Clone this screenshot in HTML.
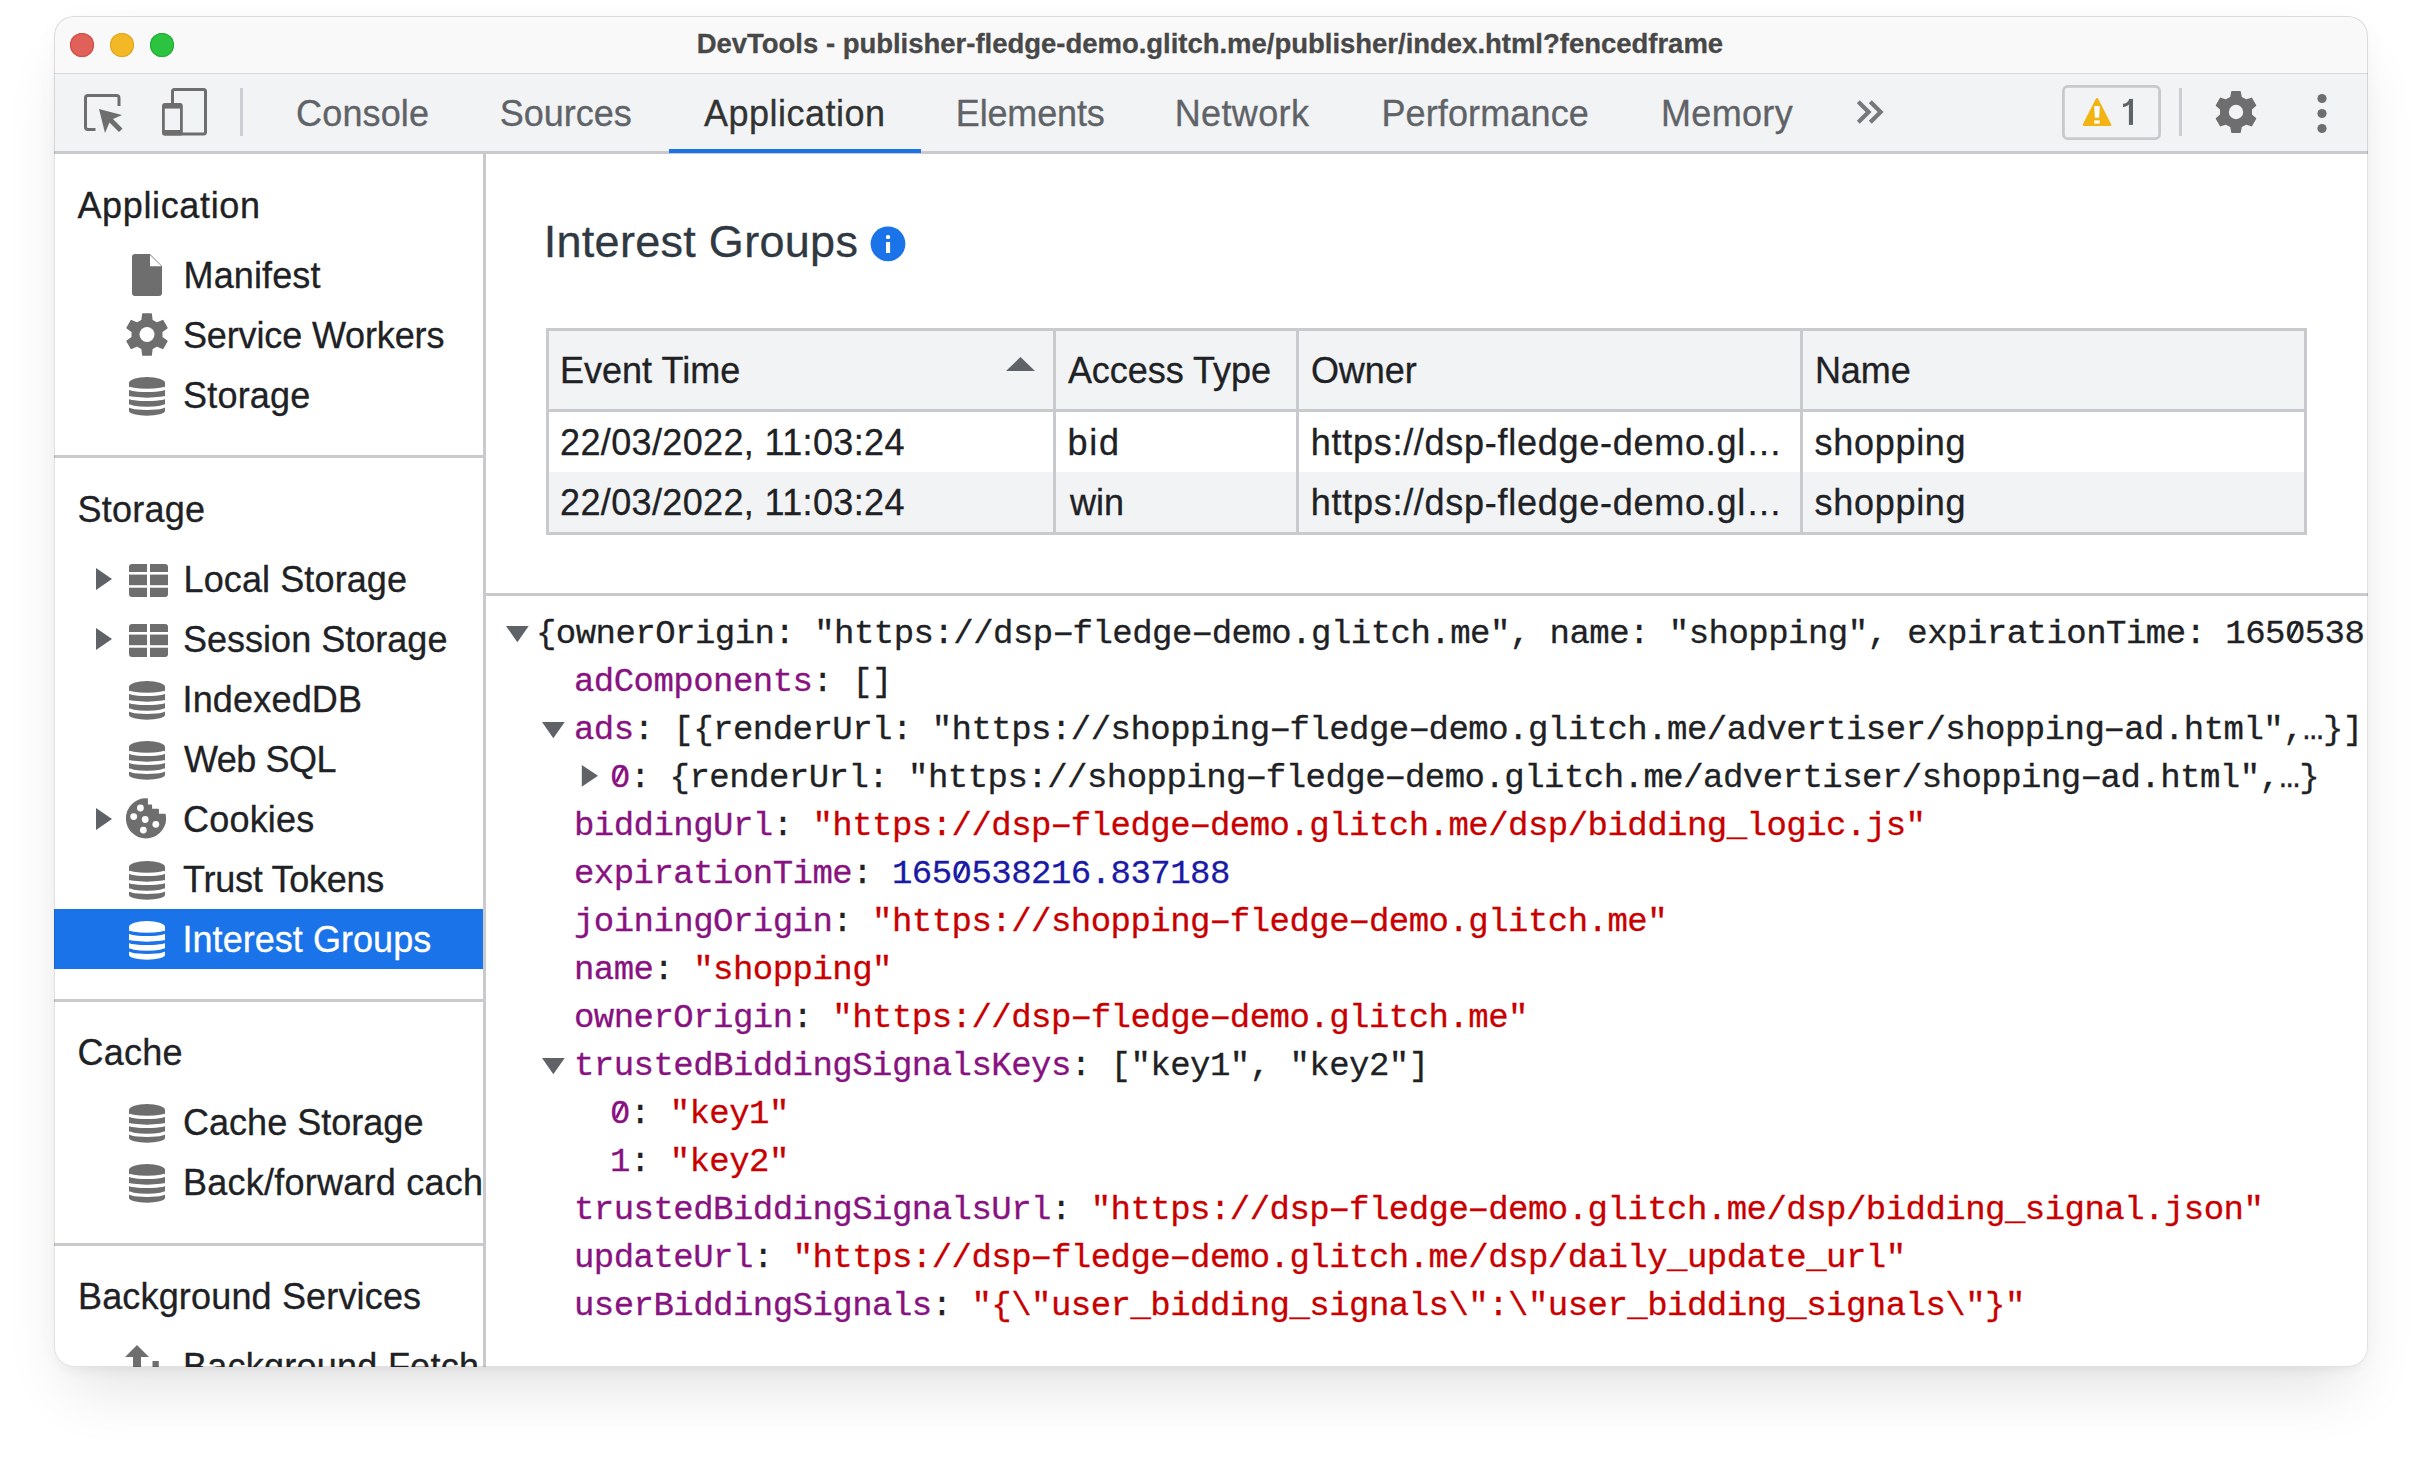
<!DOCTYPE html>
<html><head><meta charset="utf-8">
<style>
html,body{margin:0;padding:0;width:2422px;height:1458px;overflow:hidden;background:#fff;}
body{position:relative;font-family:"Liberation Sans",sans-serif;}
.t{position:absolute;white-space:pre;-webkit-text-stroke:0.3px currentColor;}
.r{position:absolute;}
.hy{display:inline-block;transform:scaleX(1.72);}
#win{position:absolute;left:54px;top:16px;width:2314px;height:1351px;border-radius:20px;overflow:hidden;background:#fff;}
#shadow{position:absolute;left:54px;top:16px;width:2314px;height:1351px;border-radius:20px;}
#pg{position:absolute;left:-54px;top:-16px;width:2422px;height:1458px;}
.clip{position:absolute;overflow:hidden;}
svg{position:absolute;overflow:visible;}
</style></head><body>
<div id="shadow" style="box-shadow:0 34px 64px -16px rgba(0,0,0,0.12),0 6px 12px -5px rgba(0,0,0,0.06),0 0 30px rgba(0,0,0,0.02);"></div>
<div id="win"><div id="pg">
<div class="r" style="left:54px;top:16px;width:2314px;height:57px;background:#f9f9f9;"></div>
<div class="r" style="left:54px;top:73px;width:2314px;height:1px;background:#d9d9db;"></div>
<div class="r" style="left:70px;top:33px;width:24px;height:24px;border-radius:50%;background:#e0605a;box-shadow:inset 0 0 0 1px #d24a43"></div>
<div class="r" style="left:110px;top:33px;width:24px;height:24px;border-radius:50%;background:#f3b826;box-shadow:inset 0 0 0 1px #e0a31c"></div>
<div class="r" style="left:150px;top:33px;width:24px;height:24px;border-radius:50%;background:#2bc33f;box-shadow:inset 0 0 0 1px #22ab32"></div>
<div class="t" style="left:696.70px;top:30.22px;font-size:27.5px;line-height:27.5px;color:#484848;font-weight:700;font-family:'Liberation Sans',sans-serif;letter-spacing:-0.019px;">DevTools - publisher-fledge-demo.glitch.me/publisher/index.html?fencedframe</div>
<div class="r" style="left:54px;top:74px;width:2314px;height:77px;background:#f1f3f4;"></div>
<div class="r" style="left:54px;top:151px;width:2314px;height:3px;background:#c9cacd;"></div>
<svg style="left:0;top:0" width="2422" height="200" viewBox="0 0 2422 200">
<g fill="none" stroke="#6e6e6e" stroke-width="3">
 <path d="M95.5 129.5 H88 Q85.5 129.5 85.5 127 V98 Q85.5 95.5 88 95.5 H116.5 Q119 95.5 119 98 V106"/>
</g>
<path fill="#6e6e6e" d="M99 109 L122 115 L113 119 L122.5 128.5 L119 132 L109.5 122.5 L105 133 Z"/>
<g fill="none" stroke="#6e6e6e" stroke-width="3">
 <path d="M172.5 103 V91.5 Q172.5 89.5 174.5 89.5 H203.5 Q205.5 89.5 205.5 91.5 V132 Q205.5 134 203.5 134 H180"/>
</g>
<rect x="162" y="103" width="20.8" height="32.8" rx="3" fill="#6e6e6e"/>
<rect x="164.8" y="108.6" width="15.2" height="21.4" fill="#f1f3f4"/>
<rect x="240" y="88" width="3" height="48" fill="#cacdd1"/>
<g fill="none" stroke="#76787b" stroke-width="4.2" stroke-linecap="butt" stroke-linejoin="miter">
 <path d="M1858.3 101.8 L1868.6 112 L1858.3 122.2"/>
 <path d="M1870.3 101.8 L1880.6 112 L1870.3 122.2"/>
</g>
<rect x="2063.4" y="86.4" width="96.2" height="52.3" rx="4.5" fill="none" stroke="#c8c9cd" stroke-width="2.8"/>
<path d="M2097 99.3 L2110 124.8 L2084 124.8 Z" fill="#f2b413" stroke="#f2b413" stroke-width="2.6" stroke-linejoin="round"/>
<path d="M2094.2 106 L2099.8 106 L2099.1 117.8 L2094.9 117.8 Z" fill="#fff"/>
<rect x="2094.3" y="120.4" width="5.4" height="3.2" fill="#fff"/>
<rect x="2128.9" y="98.9" width="4.1" height="26" fill="#5f6368"/>
<path d="M2123 103.8 Q2127.5 103.4 2129.6 98.9 L2131.5 100.5 Q2129 106.6 2123 107.1 Z" fill="#5f6368"/>
<rect x="2179" y="88" width="3" height="48" fill="#cacdd1"/>
<circle cx="2322" cy="98.5" r="4.6" fill="#6e6e6e"/>
<circle cx="2322" cy="113.5" r="4.6" fill="#6e6e6e"/>
<circle cx="2322" cy="128.5" r="4.6" fill="#6e6e6e"/>
</svg>
<svg style="left:0;top:0" width="2422" height="200"><path d="M2231.93 91.81 L2240.07 91.81 L2241.10 97.36 L2246.13 100.27 L2251.45 98.38 L2255.52 105.43 L2251.23 109.10 L2251.23 114.90 L2255.52 118.57 L2251.45 125.62 L2246.13 123.73 L2241.10 126.64 L2240.07 132.19 L2231.93 132.19 L2230.90 126.64 L2225.87 123.73 L2220.55 125.62 L2216.48 118.57 L2220.77 114.90 L2220.77 109.10 L2216.48 105.43 L2220.55 98.38 L2225.87 100.27 L2230.90 97.36Z" fill="#6e6e6e" stroke="#6e6e6e" stroke-width="1.5" stroke-linejoin="round"/><circle cx="2236" cy="112" r="7.2" fill="#f1f3f4"/></svg>
<div class="t" style="left:296.10px;top:95.52px;font-size:36px;line-height:36px;color:#5f6368;font-weight:400;font-family:'Liberation Sans',sans-serif;letter-spacing:0.140px;">Console</div>
<div class="t" style="left:499.80px;top:95.52px;font-size:36px;line-height:36px;color:#5f6368;font-weight:400;font-family:'Liberation Sans',sans-serif;letter-spacing:-0.011px;">Sources</div>
<div class="t" style="left:703.90px;top:95.52px;font-size:36px;line-height:36px;color:#333333;font-weight:400;font-family:'Liberation Sans',sans-serif;letter-spacing:0.501px;">Application</div>
<div class="t" style="left:955.80px;top:95.52px;font-size:36px;line-height:36px;color:#5f6368;font-weight:400;font-family:'Liberation Sans',sans-serif;letter-spacing:-0.152px;">Elements</div>
<div class="t" style="left:1174.70px;top:95.52px;font-size:36px;line-height:36px;color:#5f6368;font-weight:400;font-family:'Liberation Sans',sans-serif;letter-spacing:0.362px;">Network</div>
<div class="t" style="left:1381.40px;top:95.52px;font-size:36px;line-height:36px;color:#5f6368;font-weight:400;font-family:'Liberation Sans',sans-serif;letter-spacing:0.134px;">Performance</div>
<div class="t" style="left:1661.00px;top:95.52px;font-size:36px;line-height:36px;color:#5f6368;font-weight:400;font-family:'Liberation Sans',sans-serif;letter-spacing:0.338px;">Memory</div>
<div class="r" style="left:669px;top:149px;width:252px;height:4px;background:#1a73e8;"></div>
<div class="r" style="left:483px;top:151px;width:3px;height:1216px;background:#c9cacd;"></div>
<div class="clip" style="left:54px;top:153px;width:429px;height:1214px;"><div style="position:absolute;left:-54px;top:-153px;width:2422px;height:1458px;">
<div class="r" style="left:54px;top:455px;width:429px;height:3px;background:#c9cacd;"></div>
<div class="r" style="left:54px;top:999px;width:429px;height:3px;background:#c9cacd;"></div>
<div class="r" style="left:54px;top:1243px;width:429px;height:3px;background:#c9cacd;"></div>
<div class="r" style="left:54px;top:909px;width:429px;height:60px;background:#1a73e8;"></div>
<div class="t" style="left:77.40px;top:187.52px;font-size:36px;line-height:36px;color:#202124;font-weight:400;font-family:'Liberation Sans',sans-serif;letter-spacing:0.651px;">Application</div>
<div class="t" style="left:183.60px;top:257.52px;font-size:36px;line-height:36px;color:#202124;font-weight:400;font-family:'Liberation Sans',sans-serif;letter-spacing:0.107px;">Manifest</div>
<div class="t" style="left:183.00px;top:317.52px;font-size:36px;line-height:36px;color:#202124;font-weight:400;font-family:'Liberation Sans',sans-serif;letter-spacing:-0.142px;">Service Workers</div>
<div class="t" style="left:183.00px;top:377.52px;font-size:36px;line-height:36px;color:#202124;font-weight:400;font-family:'Liberation Sans',sans-serif;letter-spacing:0.206px;">Storage</div>
<div class="t" style="left:77.50px;top:491.52px;font-size:36px;line-height:36px;color:#202124;font-weight:400;font-family:'Liberation Sans',sans-serif;letter-spacing:0.239px;">Storage</div>
<div class="t" style="left:183.50px;top:561.52px;font-size:36px;line-height:36px;color:#202124;font-weight:400;font-family:'Liberation Sans',sans-serif;letter-spacing:0.114px;">Local Storage</div>
<div class="t" style="left:183.00px;top:621.52px;font-size:36px;line-height:36px;color:#202124;font-weight:400;font-family:'Liberation Sans',sans-serif;letter-spacing:0.018px;">Session Storage</div>
<div class="t" style="left:182.50px;top:681.52px;font-size:36px;line-height:36px;color:#202124;font-weight:400;font-family:'Liberation Sans',sans-serif;letter-spacing:0.174px;">IndexedDB</div>
<div class="t" style="left:184.00px;top:741.52px;font-size:36px;line-height:36px;color:#202124;font-weight:400;font-family:'Liberation Sans',sans-serif;letter-spacing:-0.498px;">Web SQL</div>
<div class="t" style="left:183.00px;top:801.52px;font-size:36px;line-height:36px;color:#202124;font-weight:400;font-family:'Liberation Sans',sans-serif;letter-spacing:0.207px;">Cookies</div>
<div class="t" style="left:183.00px;top:861.52px;font-size:36px;line-height:36px;color:#202124;font-weight:400;font-family:'Liberation Sans',sans-serif;letter-spacing:-0.257px;">Trust Tokens</div>
<div class="t" style="left:182.50px;top:921.52px;font-size:36px;line-height:36px;color:#ffffff;font-weight:400;font-family:'Liberation Sans',sans-serif;letter-spacing:0.042px;">Interest Groups</div>
<div class="t" style="left:77.50px;top:1034.52px;font-size:36px;line-height:36px;color:#202124;font-weight:400;font-family:'Liberation Sans',sans-serif;letter-spacing:0.215px;">Cache</div>
<div class="t" style="left:183.00px;top:1104.52px;font-size:36px;line-height:36px;color:#202124;font-weight:400;font-family:'Liberation Sans',sans-serif;letter-spacing:0.022px;">Cache Storage</div>
<div class="t" style="left:183.00px;top:1164.52px;font-size:36px;line-height:36px;color:#202124;font-weight:400;font-family:'Liberation Sans',sans-serif;letter-spacing:0.250px;">Back/forward cache</div>
<div class="t" style="left:78.00px;top:1278.52px;font-size:36px;line-height:36px;color:#202124;font-weight:400;font-family:'Liberation Sans',sans-serif;letter-spacing:0.163px;">Background Services</div>
<div class="t" style="left:183.00px;top:1348.52px;font-size:36px;line-height:36px;color:#202124;font-weight:400;font-family:'Liberation Sans',sans-serif;letter-spacing:0.250px;">Background Fetch</div>
<svg style="left:0;top:0" width="2422" height="1458"><path d="M135 254 H150 L162 266 V293 Q162 296 159 296 H135 Q132 296 132 293 V257 Q132 254 135 254 Z" fill="#6e6e6e"/><path d="M150 255 L161.5 266.3 H150 Z" fill="#fff"/><path d="M142.85 313.91 L151.15 313.91 L151.93 320.33 L156.80 323.15 L162.75 320.61 L166.90 327.80 L161.73 331.69 L161.73 337.31 L166.90 341.20 L162.75 348.39 L156.80 345.85 L151.93 348.67 L151.15 355.09 L142.85 355.09 L142.07 348.67 L137.20 345.85 L131.25 348.39 L127.10 341.20 L132.27 337.31 L132.27 331.69 L127.10 327.80 L131.25 320.61 L137.20 323.15 L142.07 320.33Z" fill="#6e6e6e" stroke="#6e6e6e" stroke-width="1.5" stroke-linejoin="round"/><circle cx="147" cy="334.5" r="7.5" fill="#fff"/><path d="M129 382.8 A18 5.8 0 0 1 165 382.8 V410.8 A18 5 0 0 1 129 410.8 Z" fill="#6e6e6e"/><path d="M128 387.2 A19 3.10 0 0 0 166 387.2" fill="none" stroke="#fff" stroke-width="3.2"/><path d="M128 396.4 A19 2.90 0 0 0 166 396.4" fill="none" stroke="#fff" stroke-width="3.2"/><path d="M128 404.6 A19 3.80 0 0 0 166 404.6" fill="none" stroke="#fff" stroke-width="3.2"/><path d="M96 568 L112 579.0 L96 590 Z" fill="#5f6368"/><rect x="129" y="564" width="39" height="33" rx="3" fill="#6e6e6e"/><rect x="147" y="563" width="3" height="35" fill="#fff"/><rect x="128" y="572" width="41" height="2.6" fill="#fff"/><rect x="128" y="585.2" width="41" height="2.5" fill="#fff"/><path d="M96 628 L112 639.0 L96 650 Z" fill="#5f6368"/><rect x="129" y="624" width="39" height="33" rx="3" fill="#6e6e6e"/><rect x="147" y="623" width="3" height="35" fill="#fff"/><rect x="128" y="632" width="41" height="2.6" fill="#fff"/><rect x="128" y="645.2" width="41" height="2.5" fill="#fff"/><path d="M129 686.8 A18 5.8 0 0 1 165 686.8 V714.8 A18 5 0 0 1 129 714.8 Z" fill="#6e6e6e"/><path d="M128 691.2 A19 3.10 0 0 0 166 691.2" fill="none" stroke="#fff" stroke-width="3.2"/><path d="M128 700.4 A19 2.90 0 0 0 166 700.4" fill="none" stroke="#fff" stroke-width="3.2"/><path d="M128 708.6 A19 3.80 0 0 0 166 708.6" fill="none" stroke="#fff" stroke-width="3.2"/><path d="M129 746.8 A18 5.8 0 0 1 165 746.8 V774.8 A18 5 0 0 1 129 774.8 Z" fill="#6e6e6e"/><path d="M128 751.2 A19 3.10 0 0 0 166 751.2" fill="none" stroke="#fff" stroke-width="3.2"/><path d="M128 760.4 A19 2.90 0 0 0 166 760.4" fill="none" stroke="#fff" stroke-width="3.2"/><path d="M128 768.6 A19 3.80 0 0 0 166 768.6" fill="none" stroke="#fff" stroke-width="3.2"/><path d="M96 808 L112 819.0 L96 830 Z" fill="#5f6368"/><path d="M147.2 799.0 L147.2 805.2 L151.4 805.2 L151.4 809.4000000000001 L158.2 809.4000000000001 L158.2 814.4000000000001 L165 814.4000000000001 A19.4 19.4 0 1 1 147.2 799.0 Z" fill="#6e6e6e" stroke="#6e6e6e" stroke-width="1.4" stroke-linejoin="round"/><circle cx="140.4" cy="808.0" r="3.4" fill="#fff"/><circle cx="133.7" cy="816.6" r="3.4" fill="#fff"/><circle cx="145.2" cy="819.5" r="3.4" fill="#fff"/><circle cx="155.8" cy="824.3000000000001" r="3.4" fill="#fff"/><circle cx="143.3" cy="830.1" r="3.4" fill="#fff"/><path d="M129 866.8 A18 5.8 0 0 1 165 866.8 V894.8 A18 5 0 0 1 129 894.8 Z" fill="#6e6e6e"/><path d="M128 871.2 A19 3.10 0 0 0 166 871.2" fill="none" stroke="#fff" stroke-width="3.2"/><path d="M128 880.4 A19 2.90 0 0 0 166 880.4" fill="none" stroke="#fff" stroke-width="3.2"/><path d="M128 888.6 A19 3.80 0 0 0 166 888.6" fill="none" stroke="#fff" stroke-width="3.2"/><path d="M129 926.8 A18 5.8 0 0 1 165 926.8 V954.8 A18 5 0 0 1 129 954.8 Z" fill="#ffffff"/><path d="M128 931.2 A19 3.10 0 0 0 166 931.2" fill="none" stroke="#1a73e8" stroke-width="3.2"/><path d="M128 940.4 A19 2.90 0 0 0 166 940.4" fill="none" stroke="#1a73e8" stroke-width="3.2"/><path d="M128 948.6 A19 3.80 0 0 0 166 948.6" fill="none" stroke="#1a73e8" stroke-width="3.2"/><path d="M129 1109.8 A18 5.8 0 0 1 165 1109.8 V1137.8 A18 5 0 0 1 129 1137.8 Z" fill="#6e6e6e"/><path d="M128 1114.2 A19 3.10 0 0 0 166 1114.2" fill="none" stroke="#fff" stroke-width="3.2"/><path d="M128 1123.4 A19 2.90 0 0 0 166 1123.4" fill="none" stroke="#fff" stroke-width="3.2"/><path d="M128 1131.6 A19 3.80 0 0 0 166 1131.6" fill="none" stroke="#fff" stroke-width="3.2"/><path d="M129 1169.8 A18 5.8 0 0 1 165 1169.8 V1197.8 A18 5 0 0 1 129 1197.8 Z" fill="#6e6e6e"/><path d="M128 1174.2 A19 3.10 0 0 0 166 1174.2" fill="none" stroke="#fff" stroke-width="3.2"/><path d="M128 1183.4 A19 2.90 0 0 0 166 1183.4" fill="none" stroke="#fff" stroke-width="3.2"/><path d="M128 1191.6 A19 3.80 0 0 0 166 1191.6" fill="none" stroke="#fff" stroke-width="3.2"/><path d="M137 1345 L149 1357 H141 V1380 H133 V1357 H125 Z" fill="#6e6e6e"/><rect x="152.5" y="1361" width="6.3" height="16" fill="#6e6e6e"/></svg>
</div></div>
<div class="t" style="left:543.70px;top:219.40px;font-size:45px;line-height:45px;color:#303942;font-weight:400;font-family:'Liberation Sans',sans-serif;letter-spacing:0.290px;">Interest Groups</div>
<svg style="left:0;top:0" width="2422" height="600"><circle cx="888" cy="243.8" r="17.4" fill="#1a73e8"/><rect x="886" y="242" width="4.1" height="11" fill="#fff"/><rect x="886" y="235" width="4.1" height="4.1" rx="1.6" fill="#fff"/></svg>
<div class="r" style="left:546px;top:328px;width:1761px;height:207px;background:#c9cacd;"></div>
<div class="r" style="left:549px;top:331px;width:1755px;height:78px;background:#f1f3f4;"></div>
<div class="r" style="left:549px;top:412px;width:1755px;height:60px;background:#ffffff;"></div>
<div class="r" style="left:549px;top:472px;width:1755px;height:60px;background:#f1f3f4;"></div>
<div class="r" style="left:1053px;top:331px;width:3px;height:201px;background:#c9cacd;"></div>
<div class="r" style="left:1296px;top:331px;width:3px;height:201px;background:#c9cacd;"></div>
<div class="r" style="left:1800px;top:331px;width:3px;height:201px;background:#c9cacd;"></div>
<svg style="left:0;top:0" width="2422" height="600"><path d="M1020.5 357 L1035 371 L1006 371 Z" fill="#5f6368"/></svg>
<div class="t" style="left:560.00px;top:352.52px;font-size:36px;line-height:36px;color:#202124;font-weight:400;font-family:'Liberation Sans',sans-serif;letter-spacing:0.011px;">Event Time</div>
<div class="t" style="left:1067.90px;top:352.52px;font-size:36px;line-height:36px;color:#202124;font-weight:400;font-family:'Liberation Sans',sans-serif;letter-spacing:-0.036px;">Access Type</div>
<div class="t" style="left:1310.90px;top:352.52px;font-size:36px;line-height:36px;color:#202124;font-weight:400;font-family:'Liberation Sans',sans-serif;letter-spacing:-0.061px;">Owner</div>
<div class="t" style="left:1814.90px;top:352.52px;font-size:36px;line-height:36px;color:#202124;font-weight:400;font-family:'Liberation Sans',sans-serif;letter-spacing:-0.069px;">Name</div>
<div class="t" style="left:560.00px;top:424.52px;font-size:36px;line-height:36px;color:#202124;font-weight:400;font-family:'Liberation Sans',sans-serif;letter-spacing:0.362px;">22/03/2022, 11:03:24</div>
<div class="t" style="left:1067.60px;top:424.52px;font-size:36px;line-height:36px;color:#202124;font-weight:400;font-family:'Liberation Sans',sans-serif;letter-spacing:1.690px;">bid</div>
<div class="t" style="left:1310.70px;top:424.52px;font-size:36px;line-height:36px;color:#202124;font-weight:400;font-family:'Liberation Sans',sans-serif;letter-spacing:0.733px;">https://dsp-fledge-demo.gl…</div>
<div class="t" style="left:1814.60px;top:424.52px;font-size:36px;line-height:36px;color:#202124;font-weight:400;font-family:'Liberation Sans',sans-serif;letter-spacing:0.699px;">shopping</div>
<div class="t" style="left:560.00px;top:484.52px;font-size:36px;line-height:36px;color:#202124;font-weight:400;font-family:'Liberation Sans',sans-serif;letter-spacing:0.362px;">22/03/2022, 11:03:24</div>
<div class="t" style="left:1070.00px;top:484.52px;font-size:36px;line-height:36px;color:#202124;font-weight:400;font-family:'Liberation Sans',sans-serif;letter-spacing:-0.048px;">win</div>
<div class="t" style="left:1310.70px;top:484.52px;font-size:36px;line-height:36px;color:#202124;font-weight:400;font-family:'Liberation Sans',sans-serif;letter-spacing:0.733px;">https://dsp-fledge-demo.gl…</div>
<div class="t" style="left:1814.60px;top:484.52px;font-size:36px;line-height:36px;color:#202124;font-weight:400;font-family:'Liberation Sans',sans-serif;letter-spacing:0.699px;">shopping</div>
<div class="r" style="left:486px;top:593px;width:1882px;height:3px;background:#c9cacd;"></div>
<div class="clip" style="left:486px;top:596px;width:1879px;height:771px;"><div style="position:absolute;left:-486px;top:-596px;width:2422px;height:1458px;">
<div class="t" style="left:536.00px;top:616.94px;font-size:34px;line-height:34px;color:#202124;font-weight:400;font-family:'Liberation Mono',monospace;letter-spacing:-0.530px;">{ownerOrigin: "https://dsp<span class="hy">-</span>fledge<span class="hy">-</span>demo.glitch.me", name: "shopping", expirationTime: 1650538216.837188, …}</div>
<div class="t" style="left:574.00px;top:664.94px;font-size:34px;line-height:34px;color:#202124;font-weight:400;font-family:'Liberation Mono',monospace;letter-spacing:-0.530px;"><span style="color:#881280">adComponents</span>: []</div>
<div class="t" style="left:574.00px;top:712.94px;font-size:34px;line-height:34px;color:#202124;font-weight:400;font-family:'Liberation Mono',monospace;letter-spacing:-0.530px;"><span style="color:#881280">ads</span>: [{renderUrl: "https://shopping<span class="hy">-</span>fledge<span class="hy">-</span>demo.glitch.me/advertiser/shopping<span class="hy">-</span>ad.html",…}]</div>
<div class="t" style="left:610.00px;top:760.94px;font-size:34px;line-height:34px;color:#202124;font-weight:400;font-family:'Liberation Mono',monospace;letter-spacing:-0.530px;"><span style="color:#881280">0</span>: {renderUrl: "https://shopping<span class="hy">-</span>fledge<span class="hy">-</span>demo.glitch.me/advertiser/shopping<span class="hy">-</span>ad.html",…}</div>
<div class="t" style="left:574.00px;top:808.94px;font-size:34px;line-height:34px;color:#202124;font-weight:400;font-family:'Liberation Mono',monospace;letter-spacing:-0.530px;"><span style="color:#881280">biddingUrl</span>: <span style="color:#c80000">"https://dsp<span class="hy">-</span>fledge<span class="hy">-</span>demo.glitch.me/dsp/bidding_logic.js"</span></div>
<div class="t" style="left:574.00px;top:856.94px;font-size:34px;line-height:34px;color:#202124;font-weight:400;font-family:'Liberation Mono',monospace;letter-spacing:-0.530px;"><span style="color:#881280">expirationTime</span>: <span style="color:#1a1aa6">1650538216.837188</span></div>
<div class="t" style="left:574.00px;top:904.94px;font-size:34px;line-height:34px;color:#202124;font-weight:400;font-family:'Liberation Mono',monospace;letter-spacing:-0.530px;"><span style="color:#881280">joiningOrigin</span>: <span style="color:#c80000">"https://shopping<span class="hy">-</span>fledge<span class="hy">-</span>demo.glitch.me"</span></div>
<div class="t" style="left:574.00px;top:952.94px;font-size:34px;line-height:34px;color:#202124;font-weight:400;font-family:'Liberation Mono',monospace;letter-spacing:-0.530px;"><span style="color:#881280">name</span>: <span style="color:#c80000">"shopping"</span></div>
<div class="t" style="left:574.00px;top:1000.94px;font-size:34px;line-height:34px;color:#202124;font-weight:400;font-family:'Liberation Mono',monospace;letter-spacing:-0.530px;"><span style="color:#881280">ownerOrigin</span>: <span style="color:#c80000">"https://dsp<span class="hy">-</span>fledge<span class="hy">-</span>demo.glitch.me"</span></div>
<div class="t" style="left:574.00px;top:1048.94px;font-size:34px;line-height:34px;color:#202124;font-weight:400;font-family:'Liberation Mono',monospace;letter-spacing:-0.530px;"><span style="color:#881280">trustedBiddingSignalsKeys</span>: ["key1", "key2"]</div>
<div class="t" style="left:610.00px;top:1096.94px;font-size:34px;line-height:34px;color:#202124;font-weight:400;font-family:'Liberation Mono',monospace;letter-spacing:-0.530px;"><span style="color:#881280">0</span>: <span style="color:#c80000">"key1"</span></div>
<div class="t" style="left:610.00px;top:1144.94px;font-size:34px;line-height:34px;color:#202124;font-weight:400;font-family:'Liberation Mono',monospace;letter-spacing:-0.530px;"><span style="color:#881280">1</span>: <span style="color:#c80000">"key2"</span></div>
<div class="t" style="left:574.00px;top:1192.94px;font-size:34px;line-height:34px;color:#202124;font-weight:400;font-family:'Liberation Mono',monospace;letter-spacing:-0.530px;"><span style="color:#881280">trustedBiddingSignalsUrl</span>: <span style="color:#c80000">"https://dsp<span class="hy">-</span>fledge<span class="hy">-</span>demo.glitch.me/dsp/bidding_signal.json"</span></div>
<div class="t" style="left:574.00px;top:1240.94px;font-size:34px;line-height:34px;color:#202124;font-weight:400;font-family:'Liberation Mono',monospace;letter-spacing:-0.530px;"><span style="color:#881280">updateUrl</span>: <span style="color:#c80000">"https://dsp<span class="hy">-</span>fledge<span class="hy">-</span>demo.glitch.me/dsp/daily_update_url"</span></div>
<div class="t" style="left:574.00px;top:1288.94px;font-size:34px;line-height:34px;color:#202124;font-weight:400;font-family:'Liberation Mono',monospace;letter-spacing:-0.530px;"><span style="color:#881280">userBiddingSignals</span>: <span style="color:#c80000">"{\"user_bidding_signals\":\"user_bidding_signals\"}"</span></div>
<svg style="left:0;top:0" width="2422" height="1458"><path d="M506 626 L528.7 626 L517.35 642.2 Z" fill="#5f6368"/><path d="M542 722 L564.7 722 L553.35 738.2 Z" fill="#5f6368"/><path d="M581.8 765 L598 775.8 L581.8 786.8 Z" fill="#5f6368"/><path d="M542 1058 L564.7 1058 L553.35 1074.2 Z" fill="#5f6368"/><rect x="2292.16" y="629.6" width="5.6" height="5.4" fill="#fff"/><path d="M2290.96 637.8 L2298.36 623.4" stroke="#202124" stroke-width="2.8"/><rect x="617.60" y="773.6" width="5.6" height="5.4" fill="#fff"/><path d="M616.40 781.8 L623.80 767.4" stroke="#881280" stroke-width="2.8"/><rect x="959.13" y="869.6" width="5.6" height="5.4" fill="#fff"/><path d="M957.93 877.8 L965.33 863.4" stroke="#1a1aa6" stroke-width="2.8"/><rect x="617.60" y="1109.6" width="5.6" height="5.4" fill="#fff"/><path d="M616.40 1117.8 L623.80 1103.4" stroke="#881280" stroke-width="2.8"/></svg>
</div></div>
</div></div>
<div style="position:absolute;left:54px;top:16px;width:2314px;height:1351px;border-radius:20px;box-shadow:inset 0 0 0 1px rgba(40,0,20,0.12);pointer-events:none;"></div>
</body></html>
